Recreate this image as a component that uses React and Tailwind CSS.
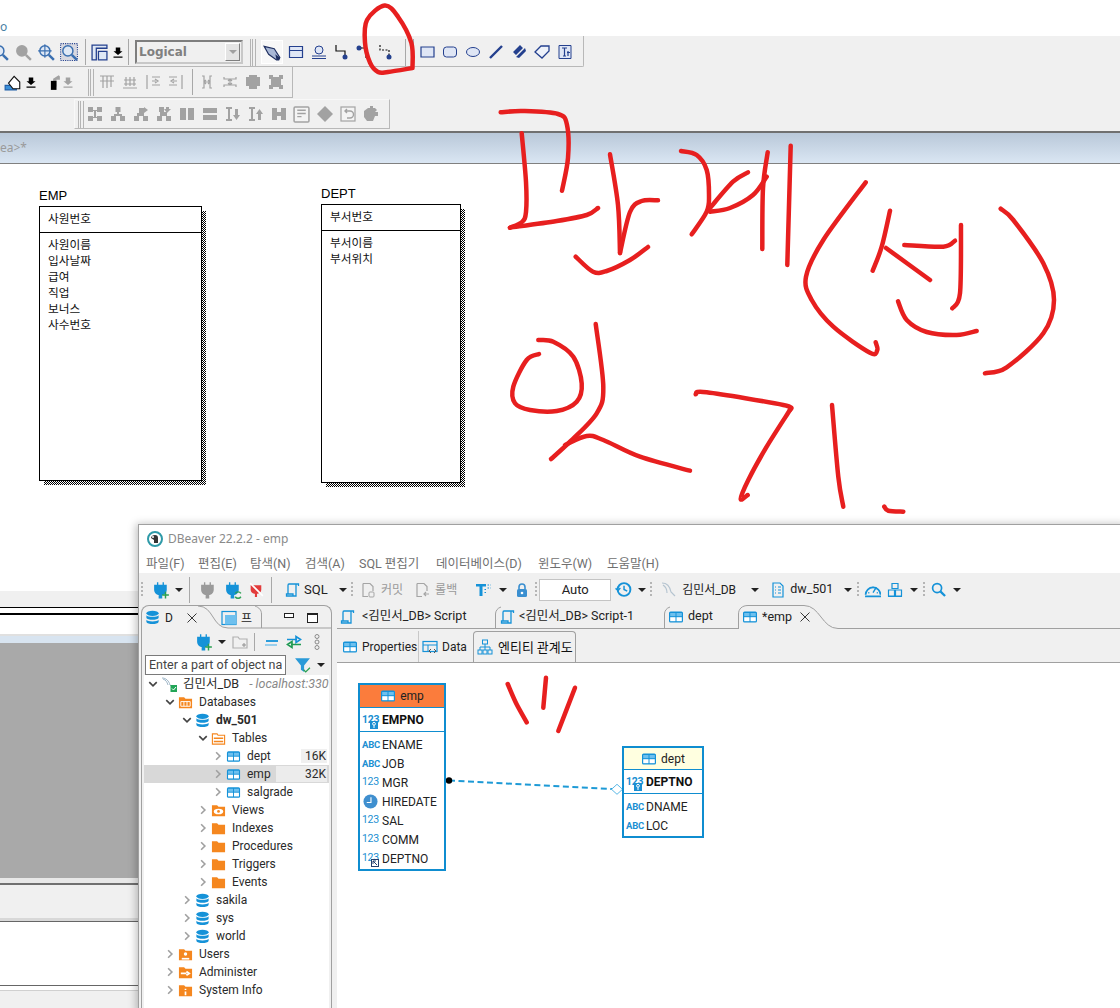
import React from 'react';

const BLUE = '#1592d8';
const ORANGE = '#f5871f';
const GREY = '#a2a2a2';
const NAVY = '#24408e';

// smooth line through hand-traced pen points
function smooth(pts) {
    let d = `M${pts[0][0]} ${pts[0][1]}`;
    for (let i = 0; i < pts.length - 1; i++) {
        const p0 = pts[i - 1] || pts[i];
        const p1 = pts[i];
        const p2 = pts[i + 1];
        const p3 = pts[i + 2] || p2;
        const c1x = p1[0] + (p2[0] - p0[0]) / 6;
        const c1y = p1[1] + (p2[1] - p0[1]) / 6;
        const c2x = p2[0] - (p3[0] - p1[0]) / 6;
        const c2y = p2[1] - (p3[1] - p1[1]) / 6;
        d += `C${c1x} ${c1y} ${c2x} ${c2y} ${p2[0]} ${p2[1]}`;
    }
    return d;
}

const strokes = [
    [[412.5, 68], [388, 72], [378, 72], [370, 62.7], [365, 42.7], [367, 20], [384.6, 5.5], [398, 16.7], [411.4, 43], [412.5, 68]],
    [[500.7, 112.3], [523, 111], [558, 114], [567, 125], [568, 158], [562, 190.7]],
    [[521.7, 133.3], [526, 182], [526, 212], [522, 222], [510, 227.7]],
    [[510, 227.7], [556.7, 221], [586.7, 215], [598, 208]],
    [[610, 154.3], [618, 205], [620, 253]],
    [[620, 253], [630, 212], [641.7, 201], [658, 200.3]],
    [[575.7, 256.7], [593, 271.7], [606.7, 271], [630, 260], [648, 247]],
    [[681, 151], [696.7, 155], [706.7, 170], [709, 195], [706.7, 211.7], [691.7, 234.3]],
    [[748, 172.3], [733, 181.7], [710, 208]],
    [[710, 211.7], [730, 208], [753, 195], [766.7, 176.7]],
    [[767.7, 152.3], [763, 188], [762.3, 249]],
    [[790.7, 145.7], [787.3, 265]],
    [[865.7, 182.3], [823.3, 240], [806, 276.7], [811.7, 300], [833.3, 326.7], [870, 352.7], [877.3, 350], [875.7, 342.3]],
    [[890, 210.7], [881.7, 246.7], [872.7, 270.7]],
    [[886, 248], [930, 280]],
    [[904.3, 245], [943.3, 246.7], [955, 240.7]],
    [[961, 225], [960, 293.3], [952.3, 308.3]],
    [[898, 301.3], [906.7, 320], [926.7, 332], [956.7, 335], [976.7, 331]],
    [[1000.7, 208.7], [1013.3, 220], [1043.3, 263.3], [1054, 300], [1043.3, 333.3], [1006.7, 367.3], [985, 373.3]],
    [[539, 354], [526.7, 360], [513.3, 386.7], [515, 403.3], [530, 410], [556.7, 411], [576.7, 401.7], [581.7, 383.3], [573.3, 356.7], [553.3, 341.7], [538.3, 340]],
    [[595.7, 324], [603.3, 386.7], [596.7, 413.3], [570, 441.7], [551, 459]],
    [[565, 445], [586.7, 436], [603.3, 440], [640, 456.7], [690, 470.7]],
    [[695.7, 394.3], [706.7, 392.3], [783.3, 405], [790, 410]],
    [[790, 410], [766.7, 446.7], [748.3, 480], [740.7, 499], [747.7, 495]],
    [[832, 405], [838.3, 476.7], [843.3, 506.7]],
    [[884.3, 506.7], [888.3, 510.7], [903.3, 511.7]],
    [[507.7, 684], [516, 703], [526.7, 722.3]],
    [[546, 677.7], [543.3, 707.7]],
    [[575, 687.7], [558.3, 731]],
];

function Ink() {
    return (
        <svg className="absolute inset-0 z-20 pointer-events-none" width="1120" height="1008" fill="none" stroke="#e71f1f" strokeWidth="4.5" strokeLinecap="round" strokeLinejoin="round">
            {strokes.map((s, i) => <path key={i} d={smooth(s)} />)}
        </svg>
    );
}

function Ico({ size = 16, children, className = '' }) {
    return <svg className={`shrink-0 ${className}`} width={size} height={size} viewBox="0 0 16 16" fill="none">{children}</svg>;
}

// ---- old toolbar icons
function Magnifier({ color = '#3a6fb0', fill = '#dfe8f5', dots, cross }) {
    return (
        <Ico size={18}>
            {dots && <rect x="0.5" y="0.5" width="15" height="15" fill="#d8d8e0" stroke={NAVY} strokeDasharray="1 1" />}
            <circle cx="7" cy="7" r="4.5" fill={fill} stroke={color} strokeWidth="1.3" />
            {cross && <path d="M7 1v12M1 7h12" stroke={color} />}
            <path d="M10.5 10.5L15 15" stroke={color} strokeWidth="2.2" />
        </Ico>
    );
}

function DownTick({ color = '#000' }) {
    return (
        <Ico size={12}>
            <path d="M5 2h6v5h3l-6 5-6-5h3zM2 14h12v1.5H2z" fill={color} />
        </Ico>
    );
}

function Tool({ d, fill, stroke = NAVY }) {
    return <Ico size={16}><path d={d} fill={fill || 'none'} stroke={stroke} strokeWidth="1.2" /></Ico>;
}

function GreyIcon({ d, filled }) {
    return (
        <Ico size={16}>
            <path d={d} fill={filled ? GREY : 'none'} stroke={GREY} strokeWidth={filled ? 0 : 1.2} />
        </Ico>
    );
}

const Grip = () => (
    <div className="flex h-[27px] shrink-0">
        <div className="w-[3px] h-full border-x border-[#b4b4b4]" />
        <div className="w-[3px] h-full border-r border-[#b4b4b4]" />
    </div>
);

const Slot = ({ children, className = '' }) => (
    <div className={`flex items-center justify-center shrink-0 w-[23px] ${className}`}>{children}</div>
);

const VSep = ({ className = '' }) => <div className={`w-px h-[26px] bg-[#a8a8a8] shrink-0 ${className}`} />;

const alignIcons = [
    'M1 2h14M1 7h14M4 2v12M8 2v12M12 2v5M12 7v6',
    'M1 14h14M4 3v9M8 3v9M12 3v9M2 6h12M2 10h12',
    'M2 1v14M7 3h8M7 7h4M7 11h8M10 5l3 2-3 2',
    'M14 1v14M1 3h8M5 7h4M1 11h8M6 5L3 7l3 2',
];
const spaceIcons = [
    'M3 2h2v12H3M13 2h-2v12h2M6 8h4M7 6l-2 2 2 2M9 6l2 2-2 2',
    'M2 3v2h12V3M2 13v-2h12v2M8 6v4M6 7l2-2 2 2M6 9l2 2 2-2',
];
const nodeIcons = [
    'M1 1h5v5H1zM10 1h5v5h-5zM1 10h5v5H1zM10 10h5v5h-5zM6 4h4v1H6zM6 11h4v1H6zM7 5h2v6H7z',
    'M5.5 1h5v5h-5zM1 10h5v5H1zM10 10h5v5h-5zM7 6h2v2h3v2H4V8h3z',
    'M1 10h5v5H1zM10 10h5v5h-5zM6 2h5v5H6zM4 7h7v3H4zM11 1l4 3-4 3z',
    'M1 10h5v5H1zM10 10h5v5h-5zM3 1h5v5H3zM4 6h7v4H4zM10 1h3v2h2l-4 4-3-4h2z',
    'M1 2h6v12H1zM9 2h6v12H9z',
    'M1 2h14v5H1zM1 9h14v5H1z',
    'M1 1h6v2H5v10h2v2H1v-2h2V3H1zM10 3h3v6h2l-3.5 5L8 9h2z',
    'M1 1h6v2H5v10h2v2H1v-2h2V3H1zM10 14h3V8h2l-3.5-5L8 8h2z',
    'M1 2h5v12H1zM10 2h5v12h-5zM6 6h4v4H6z',
];

function OldToolbars() {
    return (
        <div className="h-[95px] bg-[#f0f0f0] flex flex-col">
            {/* row 1 */}
            <div className="w-[584px] h-[31px] pt-[2px] flex items-center border-r border-b border-[#b8b8b8] rounded-br-[2px]">
                <Slot className="-ml-[12px]"><Magnifier /></Slot>
                <Slot><Magnifier color={GREY} fill={GREY} /></Slot>
                <Slot><Magnifier cross /></Slot>
                <Slot><Magnifier dots /></Slot>
                <VSep className="ml-[5px]" />
                <Slot className="ml-[2px]">
                    <Ico size={17}>
                        <path d="M1 1h14v3H5v11H1zM7 7h8v8H7z" fill="#dfe8f5" stroke={NAVY} strokeWidth="1.2" />
                    </Ico>
                </Slot>
                <div className="w-[14px] flex justify-center shrink-0"><DownTick /></div>
                <VSep className="ml-[3px]" />
                <div className="ml-[6px] w-[108px] h-[24px] shrink-0 flex items-center justify-between border-2 border-t-[#7e7e7e] border-l-[#7e7e7e] border-r-[#c8c8c8] border-b-[#c8c8c8] bg-[#f0f0f0] pl-[2px] pr-[1px]">
                    <span className="text-[12px] font-bold leading-none text-[#808080] font-['DejaVu_Sans',sans-serif]">Logical</span>
                    <span className="w-[15px] h-[18px] border border-t-white border-l-white border-r-[#808080] border-b-[#808080] bg-[#e4e4e4] flex items-center justify-center">
                        <span className="w-0 h-0 border-x-[4px] border-x-transparent border-t-[4px] border-t-[#a0a0a0]" />
                    </span>
                </div>
                <div className="ml-[7px]"><Grip /></div>
                <div className="ml-[5px] w-[22px] h-[24px] shrink-0 flex items-center justify-center border border-white bg-[#f8f8f8]">
                    <Ico size={18}>
                        <path d="M1 3l9 2 5 8-1 2-2 0-7-5z" fill="#a9b8d6" stroke="#1f2f60" strokeWidth="1" />
                        <path d="M11 10l4 3-1 2-2 0z" fill="#1f2f60" />
                    </Ico>
                </div>
                <Slot className="ml-[1px]"><Tool d="M1.5 2.5h13v11h-13zM1.5 6.5h13" fill="#dfe6f5" /></Slot>
                <Slot><Ico size={16}><circle cx="8" cy="6" r="4" fill="#dfe6f5" stroke={NAVY} /><path d="M1 12h14M1 14.5h14" stroke={NAVY} /></Ico></Slot>
                <Slot><Ico size={16}><path d="M2 1v6h9v5" stroke="#111" strokeWidth="1.2" /><circle cx="11" cy="13" r="2.5" fill={NAVY} /></Ico></Slot>
                <Slot className="-ml-[2px]"><Ico size={16}><circle cx="4" cy="4" r="2.5" fill={NAVY} /><path d="M6 4h5v10" stroke="#111" strokeWidth="1.2" /></Ico></Slot>
                <Slot><Ico size={16}><path d="M2 1v5h9v5" stroke="#111" strokeWidth="1.2" strokeDasharray="2 1.5" /><circle cx="11" cy="13" r="2.5" fill={NAVY} /></Ico></Slot>
                <VSep className="ml-[8px] h-[27px]" />
                <VSep className="ml-[7px] h-[27px]" />
                <Slot className="ml-px"><Tool d="M2 3h13v10H2z" fill="#dfe6f5" /></Slot>
                <Slot><Ico size={16}><rect x="1.5" y="3" width="13" height="10" rx="3" fill="#dfe6f5" stroke={NAVY} /></Ico></Slot>
                <Slot><Ico size={16}><ellipse cx="8" cy="8" rx="6.5" ry="4.5" fill="#dfe6f5" stroke={NAVY} /></Ico></Slot>
                <Slot><Ico size={16}><path d="M2 14L14 2" stroke={NAVY} strokeWidth="2.4" /></Ico></Slot>
                <Slot><Ico size={16}><path d="M2 8l7-7 3 3-7 7zM5 13l9-9 1 3-7 7z" fill={NAVY} /></Ico></Slot>
                <Slot><Ico size={16}><path d="M1 8l6-6h8v5l-7 7z" fill="#eef2fa" stroke={NAVY} strokeWidth="1.3" /></Ico></Slot>
                <Slot><Ico size={16}><path d="M2 1.5h12v13H2z" fill="#dfe6f5" stroke={NAVY} /><path d="M5 4h5M7.5 4v8M6 12h3M11 7v5M10 8.5h3" stroke={NAVY} strokeWidth="1.2" /></Ico></Slot>
            </div>
            {/* row 2 */}
            <div className="w-[293px] h-[31px] flex items-center border-r border-b border-[#b8b8b8]">
                <Slot className="ml-[1px]">
                    <Ico size={18}>
                        <path d="M1 11h10v4H1z" fill="#3a8fd8" stroke="#1f5fa8" />
                        <path d="M4 9l5-6 5 5v6H8z" fill="#fff" stroke="#111" />
                    </Ico>
                </Slot>
                <div className="w-[14px] flex justify-center shrink-0"><DownTick /></div>
                <Slot className="ml-[2px]">
                    <Ico size={18}>
                        <path d="M1 12h8V5l5-3 1 1v3h-3v6H1z" fill={GREY} />
                        <rect x="7" y="7" width="5" height="8" fill="#000" />
                    </Ico>
                </Slot>
                <div className="w-[14px] flex justify-center shrink-0 -ml-[2px]"><DownTick color={GREY} /></div>
                <div className="ml-[13px]"><Grip /></div>
                <div className="flex ml-px">
                    {alignIcons.map(d => <Slot key={d}><GreyIcon d={d} /></Slot>)}
                </div>
                <VSep className="ml-[5px]" />
                <Slot className="ml-[2px]"><GreyIcon d={spaceIcons[0]} /></Slot>
                <Slot><GreyIcon d={spaceIcons[1]} /></Slot>
                <Slot><GreyIcon filled d="M1 3h3V1h8v2h3v9h-3v3H4v-3H1z" /></Slot>
                <Slot><GreyIcon filled d="M1 1h4v2h6V1h4v4h-2v6h2v4h-4v-2H5v2H1v-4h2V5H1z" /></Slot>
            </div>
            {/* row 3 */}
            <div className="ml-[74px] w-[316px] h-[30px] mt-px flex items-center border-t border-l border-r border-b border-t-[#f8f8f8] border-l-[#f8f8f8] border-[#b8b8b8]">
                <div className="ml-[3px]"><Grip /></div>
                <div className="flex -ml-px">
                    {nodeIcons.map(d => <Slot key={d}><GreyIcon filled d={d} /></Slot>)}
                    <Slot><Ico size={17}><rect x="1" y="1" width="14" height="14" rx="1" fill="#f4f4f4" stroke={GREY} strokeWidth="1.4" /><path d="M4 4h8M4 7h8M4 10h4" stroke={GREY} strokeWidth="1.4" /></Ico></Slot>
                    <Slot><GreyIcon filled d="M8 0l8 8-8 8-8-8z" /></Slot>
                    <Slot><Ico size={16}><rect x="1" y="1" width="14" height="14" fill="#f4f4f4" stroke={GREY} strokeWidth="1.2" /><path d="M5 5h5a3 3 0 0 1 0 7H7M7 3L5 5l2 2" stroke={GREY} strokeWidth="1.4" /></Ico></Slot>
                    <Slot><GreyIcon filled d="M5 2h2V0h3v2h2l2 2-2 2h3v4h-3l-2 5H4l-3-4V5z" /></Slot>
                </div>
            </div>
        </div>
    );
}

function OldEntity({ name, labelClass = '', boxClass, first, rest }) {
    return (
        <div className={`absolute font-['Liberation_Sans','Noto_Sans_CJK_KR',sans-serif] ${boxClass}`}>
            <div className={`absolute left-0 -top-[18px] text-[13px] leading-[15px] text-black ${labelClass}`}>{name}</div>
            <div className="absolute left-[5px] top-[5px] -right-[4px] -bottom-[4px] bg-[repeating-conic-gradient(#000_0_25%,#fff_0_50%)] bg-[length:2px_2px]" />
            <div className="relative h-full bg-white border border-black text-[11.7px] leading-[16px] text-[#111] font-['Noto_Sans_CJK_KR',sans-serif]">
                <div className="h-[26px] px-[8px] pt-[3px] border-b border-black">{first}</div>
                <div className="px-[8px] pt-[3px]">
                    {rest.map(t => <div key={t}>{t}</div>)}
                </div>
            </div>
        </div>
    );
}

// ---- DBeaver icons
function TableIcon({ size = 16 }) {
    return (
        <Ico size={size}>
            <rect x="1" y="2.5" width="14" height="11" rx="1.6" fill={BLUE} />
            <rect x="2.2" y="4" width="5.3" height="3.2" fill="#6ec0ee" />
            <rect x="8.5" y="4" width="5.3" height="3.2" fill="#6ec0ee" />
            <rect x="2.2" y="8.2" width="5.3" height="4" fill="#fff" />
            <rect x="8.5" y="8.2" width="5.3" height="4" fill="#fff" />
        </Ico>
    );
}

function ScriptIcon() {
    return (
        <Ico>
            <path d="M5 2h9.5v2M5 2c-.8 0-1 .7-1 1.5V12M12 2.5V14H2.5v-2H9v2" stroke={BLUE} strokeWidth="1.3" />
        </Ico>
    );
}

function DbIcon() {
    return (
        <Ico size={15}>
            <ellipse cx="8" cy="3.5" rx="6.5" ry="2.8" fill={BLUE} />
            <path d="M1.5 5.5c1 2.2 12 2.2 13 0v3c-1 2.6-12 2.6-13 0zM1.5 10.5c1 2.2 12 2.2 13 0v2.2c-1 3-12 3-13 0z" fill={BLUE} />
        </Ico>
    );
}

function Folder({ children }) {
    return (
        <Ico size={15}>
            <path d="M1 2.5h5.5l1.5 1.5h7v10H1z" fill={ORANGE} />
            {children}
        </Ico>
    );
}

function MysqlIcon() {
    return (
        <Ico size={16}>
            <path d="M1 2c4 0 7 3 8 7l3 3M2 3c3 1 4 3 5 6" stroke="#9fb6c8" />
            <rect x="9.5" y="9" width="6.5" height="7" fill="#22a557" />
            <path d="M11 12.5l1.5 1.5 2.5-3" stroke="#fff" />
        </Ico>
    );
}

function Plug({ color = BLUE, badge }) {
    return (
        <Ico size={18}>
            <path d="M5 1v3M10 1v3M2.5 4h10v4c0 3-2.5 4-4 4v3H6.5v-3c-1.5 0-4-1-4-4z" fill={color} stroke={color} strokeWidth="1.2" />
            {badge === 'plus' && <path d="M12 9.5v6M9 12.5h6" stroke="#2aa052" strokeWidth="1.3" />}
            {badge === 'sync' && <path d="M10 11a3 3 0 0 1 5 0M15 14a3 3 0 0 1-5 0" stroke="#2aa052" strokeWidth="1.3" />}
        </Ico>
    );
}

function Caret({ className = '' }) {
    return <span className={`block w-0 h-0 shrink-0 border-x-[4px] border-x-transparent border-t-[4px] border-t-[#222] ${className}`} />;
}

function DotGrip({ className = '' }) {
    return <span className={`block w-[2px] h-[16px] shrink-0 bg-[repeating-linear-gradient(#b5b5b5_0_2px,transparent_2px_4px)] ${className}`} />;
}

function CloseX({ size = 12 }) {
    return <Ico size={size}><path d="M2 2l12 12M14 2L2 14" stroke="#222" strokeWidth="1.2" /></Ico>;
}

function MainToolbar() {
    return (
        <div className="h-[32px] shrink-0 pt-px flex items-center pl-[2px] text-[12px] text-[#222]">
            <DotGrip />
            <span className="ml-[9px]"><Plug badge="plus" /></span>
            <Caret className="ml-[5px]" />
            <div className="ml-[6px] w-px h-[26px] bg-[#a8a8a8]" />
            <span className="ml-[9px]"><Plug color="#9a9a9a" /></span>
            <span className="ml-[7px]"><Plug badge="sync" /></span>
            <span className="ml-[6px]">
                <Ico size={17}>
                    <path d="M5 1v3M10 1v3M2.5 4h10v4c0 3-2.5 4-4 4v3H6.5v-3c-1.5 0-4-1-4-4z" fill="#e23b3b" />
                    <path d="M2 2l12 12" stroke="#fff" strokeWidth="1.5" />
                </Ico>
            </span>
            <div className="ml-[6px] w-px h-[26px] bg-[#a8a8a8]" />
            <span className="ml-[12px]"><ScriptIcon /></span>
            <span className="ml-[4px] w-[23px] text-[13px]">SQL</span>
            <Caret className="ml-[12px]" />
            <DotGrip className="ml-[4px]" />
            <span className="ml-[7px]">
                <Ico><path d="M3 1.5h7l3 3V9M3 1.5v13h5" stroke="#a5a5a5" strokeWidth="1.2" /><rect x="9" y="10" width="5" height="5" rx="1" stroke="#a5a5a5" /></Ico>
            </span>
            <span className="ml-[5px] text-[#9a9a9a]">커밋</span>
            <span className="ml-[11px]">
                <Ico><path d="M3 1.5h7l3 3V9M3 1.5v13h5M10 12h5M12 10l-2 2 2 2" stroke="#a5a5a5" strokeWidth="1.2" /></Ico>
            </span>
            <span className="ml-[5px] text-[#9a9a9a]">롤백</span>
            <span className="ml-[18px]">
                <Ico><path d="M1 2h10v2.5H7.5V14h-3V4.5H1z" fill={BLUE} /><path d="M12.5 3h3M12.5 6h3M9.5 7.5h2M9.5 10.5h2" stroke={BLUE} strokeDasharray="1.5 1" /></Ico>
            </span>
            <Caret className="ml-[8px]" />
            <span className="ml-[7px]">
                <Ico><path d="M5 7V5a3 3 0 0 1 6 0v2" stroke="#3a8fd0" strokeWidth="1.6" /><rect x="3" y="7" width="10" height="8" rx="1.5" fill="#3a8fd0" /><circle cx="8" cy="11" r="1.3" fill="#fff" /></Ico>
            </span>
            <DotGrip className="ml-[5px]" />
            <div className="ml-[2px] w-[72px] h-[22px] flex items-center justify-center border border-[#c4c4c4] bg-white text-[13px]">Auto</div>
            <span className="ml-[4px]">
                <Ico size={17}><circle cx="8.5" cy="8" r="6" stroke={BLUE} strokeWidth="1.8" /><path d="M8.5 4.5V8l3 1.5M0.5 7L3 9l2-2.5" stroke={BLUE} strokeWidth="1.4" /></Ico>
            </span>
            <Caret className="ml-[6px]" />
            <DotGrip className="ml-[4px]" />
            <span className="ml-[9px]">
                <Ico><path d="M1 1c5 0 8 4 9 9l4 4M2 3c3 2 4 4 4 8" stroke="#b5c4d0" strokeWidth="1.2" /></Ico>
            </span>
            <span className="ml-[5px] w-[55px]">김민서_DB</span>
            <Caret className="ml-[14px]" />
            <span className="ml-[11px]">
                <Ico><path d="M3 1h7l3 3v11H3z" stroke={BLUE} strokeWidth="1.2" /><path d="M5 5h1M8 5h3M5 8h1M8 8h3M5 11h1M8 11h3" stroke={BLUE} /></Ico>
            </span>
            <span className="ml-[4px] w-[40px] text-[12.5px]">dw_501</span>
            <Caret className="ml-[14px]" />
            <DotGrip className="ml-[5px]" />
            <span className="ml-[5px]">
                <Ico size={17}><path d="M1.5 13a7 7 0 1 1 14 0M1 14.5h15" stroke={BLUE} strokeWidth="1.6" /><path d="M8.5 11l3-5M4 11h1M12 11h1M8.5 5.5v1" stroke={BLUE} strokeWidth="1.3" /></Ico>
            </span>
            <span className="ml-[6px]">
                <Ico size={16}><path d="M5 1.5h6v5H5zM1.5 8h6v6h-6zM8.5 8h6v6h-6zM1 14.5h14" stroke={BLUE} strokeWidth="1.2" /></Ico>
            </span>
            <Caret className="ml-[7px]" />
            <DotGrip className="ml-[5px]" />
            <span className="ml-[6px]">
                <Ico size={15}><circle cx="6.5" cy="6.5" r="4.8" stroke={BLUE} strokeWidth="1.8" /><path d="M10 10l5 5" stroke={BLUE} strokeWidth="2.4" /></Ico>
            </span>
            <Caret className="ml-[7px]" />
        </div>
    );
}

const depthPad = ['pl-[4px]', 'pl-[21px]', 'pl-[38px]', 'pl-[54px]', 'pl-[69px]'];

function TreeRow({ depth, open, icon, selected, children, size, bar }) {
    return (
        <div className={`relative h-[18px] flex items-center whitespace-nowrap overflow-hidden ${depthPad[depth]} ${selected ? 'bg-[#d8d8d8]' : ''}`}>
            <Ico size={10}>
                {open
                    ? <path d="M2 5l6 6 6-6" stroke="#444" strokeWidth="2.6" />
                    : <path d="M5 2l6 6-6 6" stroke="#a0a0a0" strokeWidth="2.6" />}
            </Ico>
            <span className="ml-[3px] flex">{icon}</span>
            <span className="ml-[6px]">{children}</span>
            {size && (
                <span className={`absolute right-[2px] text-right pr-[1px] ${bar}`}>{size}</span>
            )}
        </div>
    );
}

function Tree() {
    return (
        <div className="flex-1 bg-white mx-[2px] text-[12px] text-[#2a2a2a]">
            <TreeRow depth={0} open icon={<MysqlIcon />}>
                <span className="text-[12.5px]">김민서_DB<span className="ml-[10px] italic text-[#888]">- localhost:330</span></span>
            </TreeRow>
            <TreeRow depth={1} open icon={<Folder><path d="M3 7h10v5H3zM6.3 7v5M9.6 7v5" stroke="#fff" /></Folder>}>Databases</TreeRow>
            <TreeRow depth={2} open icon={<DbIcon />}><b>dw_501</b></TreeRow>
            <TreeRow depth={3} open icon={<Ico size={15}><path d="M1.5 3h5l1 1.5h7V14h-13z" stroke={ORANGE} strokeWidth="1.2" fill="#fff" /><path d="M3 7h10v1.5H3zM3 10.5h10V12H3z" fill={ORANGE} /></Ico>}>Tables</TreeRow>
            <TreeRow depth={4} icon={<TableIcon size={15} />} size="16K" bar="w-[26px] h-[14px] leading-[14px] bg-[#f0f0f0]">dept</TreeRow>
            <TreeRow depth={4} selected icon={<TableIcon size={15} />} size="32K" bar="w-[51px] h-[16px] leading-[16px] bg-[#ececec]">emp</TreeRow>
            <TreeRow depth={4} icon={<TableIcon size={15} />}>salgrade</TreeRow>
            <TreeRow depth={3} icon={<Folder><ellipse cx="8" cy="9" rx="5" ry="3" fill="#fff" /><circle cx="8" cy="9" r="1.5" fill={ORANGE} /></Folder>}>Views</TreeRow>
            <TreeRow depth={3} icon={<Folder />}>Indexes</TreeRow>
            <TreeRow depth={3} icon={<Folder />}>Procedures</TreeRow>
            <TreeRow depth={3} icon={<Folder />}>Triggers</TreeRow>
            <TreeRow depth={3} icon={<Folder />}>Events</TreeRow>
            <TreeRow depth={2} icon={<DbIcon />}>sakila</TreeRow>
            <TreeRow depth={2} icon={<DbIcon />}>sys</TreeRow>
            <TreeRow depth={2} icon={<DbIcon />}>world</TreeRow>
            <TreeRow depth={1} icon={<Folder><circle cx="8" cy="7.5" r="1.8" fill="#fff" /><path d="M4 12.5h8" stroke="#fff" strokeWidth="1.8" /></Folder>}>Users</TreeRow>
            <TreeRow depth={1} icon={<Folder><path d="M3 9h6M9 7l3 2-3 2" stroke="#fff" strokeWidth="1.8" /></Folder>}>Administer</TreeRow>
            <TreeRow depth={1} icon={<Folder><path d="M8 6v1.5M8 9v4" stroke="#fff" strokeWidth="1.8" /></Folder>}>System Info</TreeRow>
        </div>
    );
}

function NavigatorPane() {
    return (
        <div className="relative w-[191px] shrink-0 flex flex-col border-x border-t border-[#a0a0a0] rounded-t-[8px] bg-[#f0f0f0] text-[12px] text-[#222]">
            <svg className="absolute left-0 top-0 pointer-events-none" width="189" height="24" fill="none" stroke="#a0a0a0">
                <path d="M56 0C72 0 70 22 86 22H189" />
                <path d="M119.5 22V8C119.5 4 117 1.5 113 0" />
            </svg>
            <div className="h-[23px] flex items-center pl-[3px]">
                <DbIcon />
                <span className="ml-[5px] w-[8px]">D</span>
                <span className="ml-[13px]"><CloseX /></span>
                <span className="ml-[23px]">
                    <Ico><rect x="1" y="1.5" width="14" height="13" stroke={BLUE} strokeWidth="1.2" /><rect x="4" y="5" width="11" height="9.5" fill="#6ec0ee" /></Ico>
                </span>
                <span className="ml-[4px] w-[11px] font-['Noto_Sans_CJK_KR',sans-serif]">프</span>
                <span className="ml-[32px] w-[10px] h-[5px] border border-[#222] bg-white -mt-[5px]" />
                <span className="ml-[13px] w-[11px] h-[10px] border border-[#222] border-t-2 bg-white" />
            </div>
            <div className="h-[25px] flex items-center">
                <span className="ml-[53px]"><Plug badge="plus" /></span>
                <Caret className="ml-[5px]" />
                <span className="ml-[6px]">
                    <Ico><path d="M1 3h5l1.5 2H15v9H1z" stroke="#b0b0b0" strokeWidth="1.2" /><path d="M10 11h4M12 9v4" stroke="#909090" /></Ico>
                </span>
                <div className="ml-[6px] w-px h-[18px] bg-[#a8a8a8]" />
                <span className="ml-[9px]">
                    <Ico><path d="M2 7h12" stroke={BLUE} strokeWidth="1.8" /><path d="M1 11h12" stroke="#7cc4ec" strokeWidth="1.5" /></Ico>
                </span>
                <span className="ml-[6px]">
                    <Ico><path d="M1 5.5h10M14.5 5.5L10 2.5v6z" stroke={BLUE} strokeWidth="1.6" /><path d="M15 10.5H5M1.5 10.5L6 7.5v6z" stroke="#1f9a52" strokeWidth="1.6" /></Ico>
                </span>
                <span className="ml-[11px]">
                    <svg width="8" height="16" fill="none" stroke="#8a8a8a"><circle cx="4" cy="2.5" r="2" /><circle cx="4" cy="8" r="2" /><circle cx="4" cy="13.5" r="2" /></svg>
                </span>
            </div>
            <div className="h-[21px] flex items-center">
                <input readOnly value="Enter a part of object name" className="ml-[3px] w-[141px] h-[20px] border border-[#7a7a7a] bg-white px-[3px] text-[12.5px] text-[#444] outline-none" />
                <span className="ml-[8px]">
                    <Ico size={17}><path d="M1 2h14L9.5 9v6L6.5 13V9z" fill="#2a9ad8" /><path d="M9 13l2 2 4-4" stroke="#2aa052" strokeWidth="1.2" /></Ico>
                </span>
                <Caret className="ml-[6px]" />
            </div>
            <Tree />
        </div>
    );
}

function EditorTabs() {
    return (
        <div className="h-[24px] flex border-b border-[#a0a0a0] text-[12.5px] text-[#222] whitespace-nowrap">
            <div className="w-[158px] shrink-0 flex items-center pl-[2px]">
                <ScriptIcon />
                <span className="ml-[7px]">{'<김민서_DB> Script'}</span>
            </div>
            <div className="relative w-[169px] shrink-0 flex items-center pl-[4px]">
                <svg className="absolute left-0 top-0" width="10" height="24" fill="none" stroke="#a0a0a0"><path d="M.5 24V9C.5 6 2.5 3 6 2" /></svg>
                <ScriptIcon />
                <span className="ml-[4px]">{'<김민서_DB> Script-1'}</span>
            </div>
            <div className="relative w-[74px] shrink-0 flex items-center pl-[4px]">
                <svg className="absolute left-0 top-0" width="10" height="24" fill="none" stroke="#a0a0a0"><path d="M.5 24V9C.5 6 2.5 3 6 2" /></svg>
                <TableIcon />
                <span className="ml-[4px]">dept</span>
            </div>
            <div className="relative w-[102px] h-[24px] shrink-0 flex items-center pl-[4px] bg-[#f0f0f0] z-10">
                <svg className="absolute left-0 top-0" width="102" height="24" fill="none" stroke="#a0a0a0">
                    <path d="M.5 24V9C.5 4 4 .5 10 .5H66C82 .5 84 23.5 100 23.5H102" />
                </svg>
                <TableIcon />
                <span className="ml-[4px] w-[30px]">*emp</span>
                <span className="ml-[7px]"><CloseX /></span>
            </div>
        </div>
    );
}

function SubTabs() {
    return (
        <div className="h-[34px] flex items-end border-b border-[#a0a0a0] text-[12px] text-[#222] whitespace-nowrap">
            <div className="w-[82px] h-[31px] shrink-0 flex items-center pl-[5px] border-r border-[#c8c8c8]">
                <TableIcon />
                <span className="ml-[4px]">Properties</span>
            </div>
            <div className="w-[54px] h-[31px] shrink-0 flex items-center pl-[3px]">
                <Ico><rect x="1" y="2.5" width="14" height="10" stroke={BLUE} strokeWidth="1.2" /><path d="M1 6h14M6 6v7" stroke={BLUE} /><path d="M9 10l-2 2 2 2M12 10l2 2-2 2" stroke="#555" /></Ico>
                <span className="ml-[4px]">Data</span>
            </div>
            <div className="w-[103px] h-[31px] shrink-0 flex items-center pl-[3px] border-x border-t border-[#a0a0a0] rounded-t-[4px]">
                <Ico><rect x="5.5" y="1" width="5" height="4" stroke={BLUE} /><rect x="1" y="11" width="4" height="4" stroke={BLUE} /><rect x="6" y="11" width="4" height="4" stroke={BLUE} /><rect x="11" y="11" width="4" height="4" stroke={BLUE} /><path d="M8 5v3M3 11V8h10v3M8 8v3" stroke={BLUE} /></Ico>
                <span className="ml-[5px] text-[13px] font-['Noto_Sans_CJK_KR',sans-serif] text-[#111]">엔티티 관계도</span>
            </div>
        </div>
    );
}

function FieldIcon({ type, badge }) {
    return (
        <span className="relative flex items-center w-[20px] h-[19px] shrink-0">
            {type === '123' && <span className="text-[10.5px] leading-none tracking-[-0.3px] text-[#1b8fd2]">123</span>}
            {type === 'abc' && <span className="text-[9.5px] font-bold leading-none tracking-[-0.2px] text-[#1b8fd2]">ABC</span>}
            {type === 'clock' && (
                <Ico size={15} className="ml-px">
                    <circle cx="8" cy="8" r="7.5" fill="#3f8fcf" />
                    <path d="M8.5 3.5V9H4" stroke="#fff" strokeWidth="1.2" />
                </Ico>
            )}
            {badge === 'key' && (
                <svg className="absolute left-[8px] top-[10px]" width="8" height="8" fill="none">
                    <rect width="8" height="8" fill="#1b8fd2" />
                    <circle cx="4" cy="2.8" r="1.4" stroke="#fff" />
                    <path d="M4 4.2V7" stroke="#fff" />
                </svg>
            )}
            {badge === 'fk' && (
                <svg className="absolute left-[9px] top-[10px]" width="8" height="8" fill="none" stroke="#24406e"><rect x=".5" y=".5" width="7" height="7" fill="#fff" /><path d="M2 2l4 4M2 5V2h3" /></svg>
            )}
        </span>
    );
}

function ErNode({ name, boxClass, headClass, pk, fields }) {
    return (
        <div className={`absolute border-2 border-[#0f8dd0] bg-white text-[12px] text-[#222] whitespace-nowrap ${boxClass}`}>
            <div className={`flex items-center justify-center gap-[4px] border-b border-[#0f8dd0] ${headClass}`}>
                <TableIcon />
                <span>{name}</span>
            </div>
            <div className="h-[24px] pt-px flex items-center pl-[2px] border-b border-[#0f8dd0] font-bold text-[#111]">
                <FieldIcon type="123" badge="key" />
                {pk}
            </div>
            <div className="pt-[3px] pb-px">
                {fields.map(f => (
                    <div key={f.name} className="h-[19px] flex items-center pl-[2px]">
                        <FieldIcon type={f.type} badge={f.badge} />
                        {f.name}
                    </div>
                ))}
            </div>
        </div>
    );
}

function DbeaverWindow() {
    return (
        <div className="absolute left-[138px] top-[524px] z-10 w-[990px] h-[490px] flex flex-col border border-[#a0a0a0] bg-[#f0f0f0] shadow-[-2px_0_8px_rgba(0,0,0,0.25)] font-['Roboto','Noto_Sans_CJK_KR',sans-serif]">
            <div className="h-[27px] shrink-0 pt-px bg-white flex items-center pl-[8px] text-[12px] text-[#8a8a8a] font-['Noto_Sans',sans-serif]">
                <Ico size={16}>
                    <circle cx="8" cy="8" r="7" fill="#fff" stroke="#2f9aa8" strokeWidth="2" />
                    <path d="M4 7c0-2 2-3 4-3s3 1 3 3v5H7V9z" fill="#333" />
                    <circle cx="6" cy="6" r="1" fill="#fff" />
                </Ico>
                <span className="ml-[5px]">DBeaver 22.2.2 - emp</span>
            </div>
            <div className="h-[21px] shrink-0 pt-[3px] bg-white flex items-center pl-[7px] text-[12.5px] text-[#707070] whitespace-nowrap">
                <span className="w-[52px]">파일(F)</span>
                <span className="w-[52px]">편집(E)</span>
                <span className="w-[55px]">탐색(N)</span>
                <span className="w-[54px]">검색(A)</span>
                <span className="w-[77px]">SQL 편집기</span>
                <span className="w-[102px]">데이터베이스(D)</span>
                <span className="w-[69px]">윈도우(W)</span>
                <span>도움말(H)</span>
            </div>
            <MainToolbar />
            <div className="flex-1 flex pl-[2px] min-h-0">
                <NavigatorPane />
                <div className="w-[5px] shrink-0" />
                <div className="flex-1 flex flex-col min-w-0">
                    <EditorTabs />
                    <SubTabs />
                    <div className="relative flex-1 bg-white">
                        <svg className="absolute inset-0" width="783" height="345" fill="none">
                            <path d="M112 117.5L275 126" stroke="#1d9ad6" strokeWidth="2" strokeDasharray="6 3.5" />
                            <circle cx="112" cy="117.5" r="3.2" fill="#000" />
                            <path d="M274.5 126.3l5.5-5 5.5 5-5.5 5z" fill="#fff" stroke="#5bb8e6" />
                        </svg>
                        <ErNode
                            name="emp"
                            boxClass="left-[21px] top-[20px] w-[88px]"
                            headClass="h-[23px] bg-[#fb7c3c]"
                            pk="EMPNO"
                            fields={[
                                { name: 'ENAME', type: 'abc' },
                                { name: 'JOB', type: 'abc' },
                                { name: 'MGR', type: '123' },
                                { name: 'HIREDATE', type: 'clock' },
                                { name: 'SAL', type: '123' },
                                { name: 'COMM', type: '123' },
                                { name: 'DEPTNO', type: '123', badge: 'fk' },
                            ]}
                        />
                        <ErNode
                            name="dept"
                            boxClass="left-[285px] top-[83px] w-[82px]"
                            headClass="h-[22px] bg-[#ffffe0]"
                            pk="DEPTNO"
                            fields={[
                                { name: 'DNAME', type: 'abc' },
                                { name: 'LOC', type: 'abc' },
                            ]}
                        />
                    </div>
                </div>
            </div>
        </div>
    );
}

export default function App() {
    return (
        <div className="relative w-[1120px] h-[1008px] overflow-hidden bg-white font-['Noto_Sans','Noto_Sans_CJK_KR',sans-serif]">
            {/* the older modelling tool behind */}
            <div className="flex flex-col h-full">
                <div className="h-[36px] pt-[18px] pl-0 text-[12px] leading-[18px] text-[#4a7fa5]">o</div>
                <OldToolbars />
                <div className="h-[2px] bg-[#707070]" />
                <div className="h-[30px] flex items-center bg-gradient-to-b from-[#b9c8d9] to-[#dae6f3] text-[12px] text-[#9a9a9a]">
                    <span>ea&gt;*</span>
                </div>
                <div className="h-px bg-[#808080]" />
                <div className="relative h-[427px] bg-white">
                    <OldEntity name="EMP" boxClass="left-[39px] top-[42px] w-[163px] h-[275px]" first="사원번호" rest={['사원이름', '입사날짜', '급여', '직업', '보너스', '사수번호']} />
                    <OldEntity name="DEPT" boxClass="left-[321px] top-[40px] w-[140px] h-[279px]" first="부서번호" rest={['부서이름', '부서위치']} />
                </div>
                <div className="h-[16px] bg-[#f0f0f0]" />
                <div className="h-px bg-black" />
                <div className="h-[5px] bg-white" />
                <div className="h-[2px] bg-black" />
                <div className="h-[19px] bg-white" />
                <div className="h-[2px] bg-[#e0e0e0]" />
                <div className="h-[7px] bg-[#d8e4f0]" />
                <div className="h-[235px] bg-[#a9a9a9]" />
                <div className="h-[5px] bg-[#e8e8e8]" />
                <div className="h-[2px] bg-[#707070]" />
                <div className="h-[33px] bg-[#f0f0f0]" />
                <div className="h-[3px] bg-[#d8d8d8]" />
                <div className="h-px bg-[#666]" />
                <div className="h-[63px] bg-white" />
                <div className="h-px bg-[#666]" />
                <div className="h-[4px] bg-white" />
                <div className="h-px bg-[#d0d0d0]" />
                <div className="flex-1 bg-[#f0f0f0]" />
            </div>
            <DbeaverWindow />
            <Ink />
        </div>
    );
}
